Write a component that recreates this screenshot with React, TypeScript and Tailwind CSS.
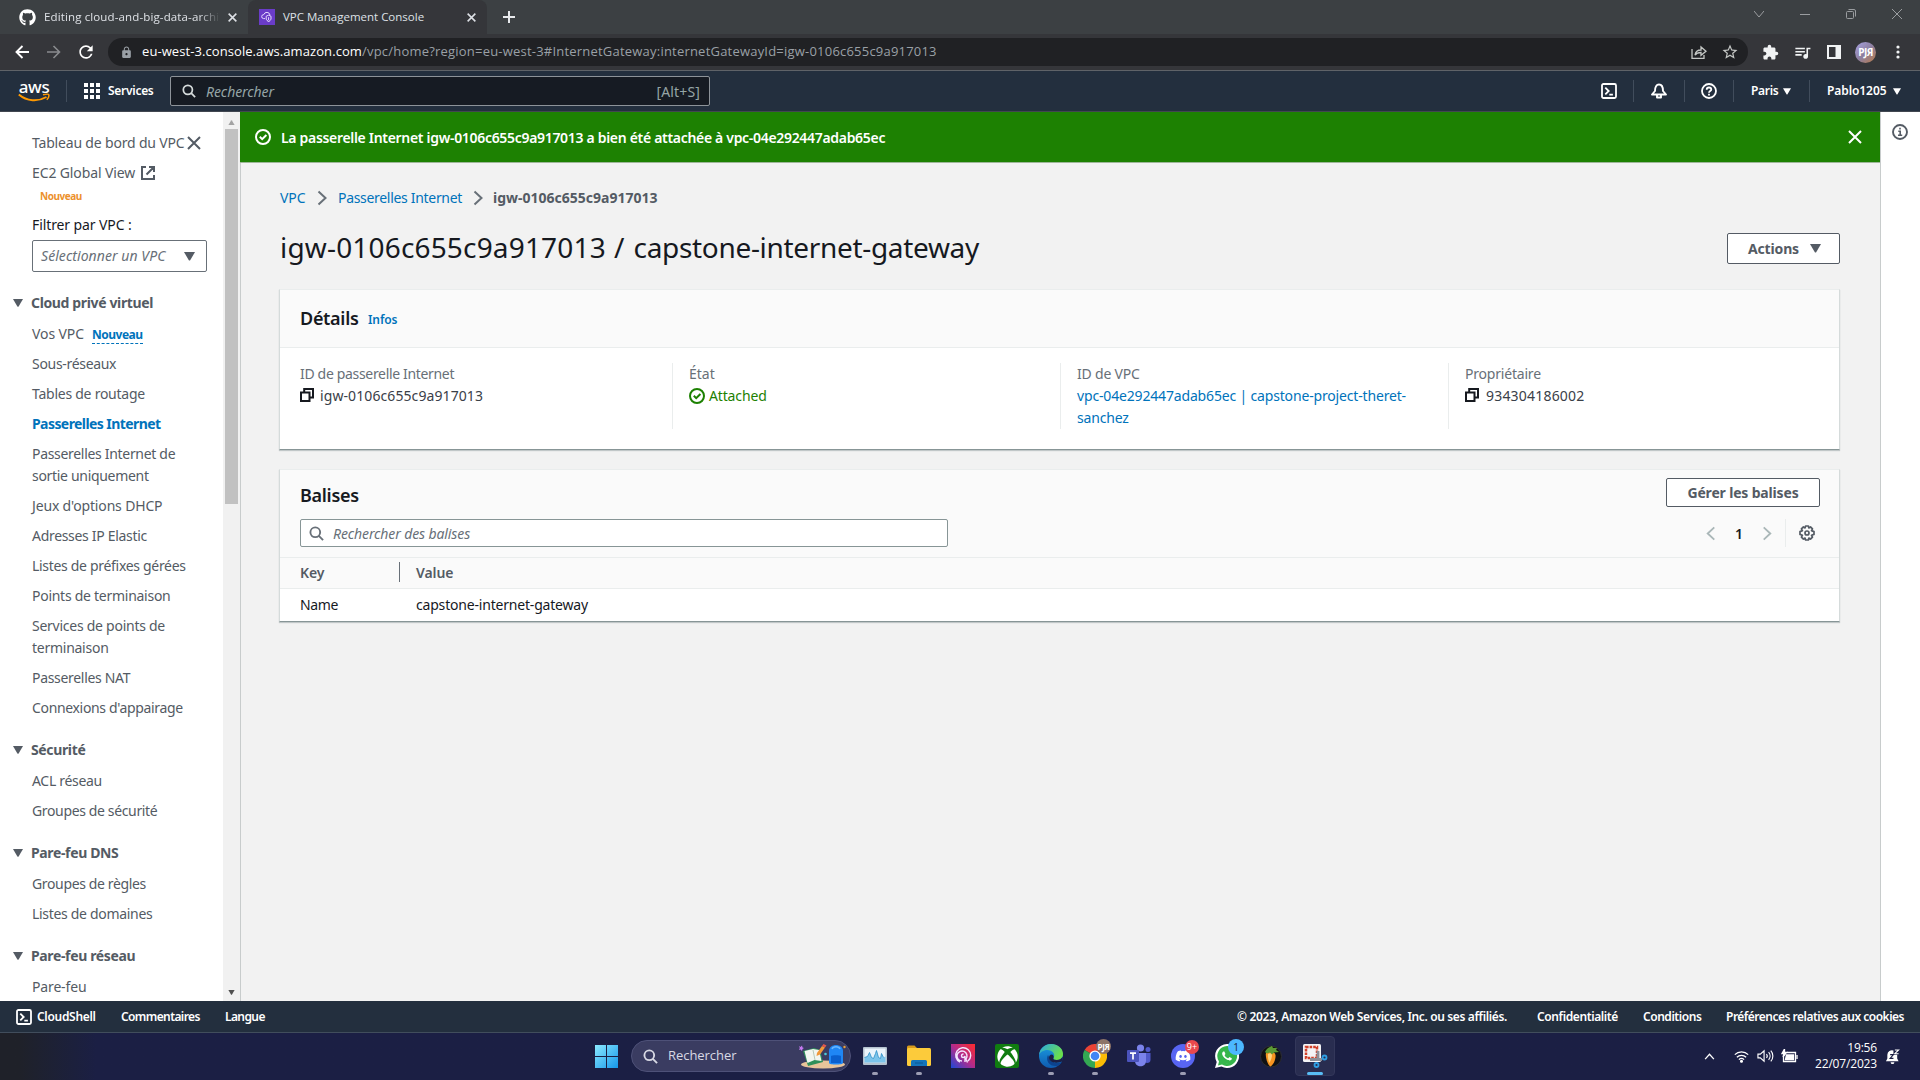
import React from "react";
import { FaGithub, FaXbox, FaDiscord, FaWhatsapp } from "react-icons/fa";
import { MdExtension, MdLock, MdStarBorder, MdRefresh, MdQueueMusic } from "react-icons/md";

type IconProps = { className?: string };

const Triangle = ({ className = "" }: IconProps) => (
  <svg viewBox="0 0 10 8" className={`shrink-0 ${className}`} fill="currentColor">
    <path d="M0 0h10L5.6 7.4a.8.8 0 0 1-1.2 0z" />
  </svg>
);

const Cross = ({ className = "" }: IconProps) => (
  <svg viewBox="0 0 14 14" className={`shrink-0 ${className}`} fill="none" stroke="currentColor">
    <path d="M1 1l12 12M13 1L1 13" />
  </svg>
);

const Chevron = ({ className = "" }: IconProps) => (
  <svg viewBox="0 0 10 16" className={`shrink-0 ${className}`} fill="none" stroke="currentColor" strokeWidth="2">
    <path d="M1.5 1.5L8.5 8l-7 6.5" />
  </svg>
);

const Magnifier = ({ className = "" }: IconProps) => (
  <svg viewBox="0 0 16 16" className={`shrink-0 ${className}`} fill="none" stroke="currentColor" strokeWidth="2">
    <circle cx="6.7" cy="6.7" r="5.2" />
    <path d="M10.5 10.5L15 15" />
  </svg>
);

const CheckCircle = ({ className = "" }: IconProps) => (
  <svg viewBox="0 0 16 16" className={`shrink-0 ${className}`} fill="none" stroke="currentColor" strokeWidth="2">
    <circle cx="8" cy="8" r="7" />
    <path d="M4.8 7.8l2.4 2.4 4.2-4.2" />
  </svg>
);

const CopyIcon = () => (
  <svg viewBox="0 0 14 14" className="mb-[2px] size-[14px] shrink-0" fill="none" stroke="#16191f" strokeWidth="2">
    <path d="M1 4.5h8.5V13H1zM4.2 4.5V1H13v8.4H9.8" />
  </svg>
);

const ShellIcon = () => (
  <svg viewBox="0 0 16 16" className="size-4 shrink-0" fill="none" stroke="#fff" strokeWidth="1.8">
    <rect x="1" y="1" width="14" height="14" rx="1.5" />
    <path d="M4.3 4.6L7.7 8l-3.4 3.4M8.3 11.6h3.6" />
  </svg>
);

const NavDivider = () => <div className="h-[22px] w-px shrink-0 bg-[#414d5c]" />;

function TabStrip() {
  return (
    <div className="flex h-[34px] shrink-0 bg-[#3c4043] font-['Open_Sans',sans-serif] text-[11.5px] text-[#dee1e6]">
      <div className="flex w-[248px] items-center pl-[19px]">
        <FaGithub className="size-[17px] text-white" />
        <span className="ml-2 w-[176px] overflow-hidden tracking-[0.130px] whitespace-nowrap [mask-image:linear-gradient(to_right,#000_88%,transparent)]">
          Editing cloud-and-big-data-archi
        </span>
        <Cross className="ml-2 size-[9px] stroke-[2.4]" />
      </div>
      <div className="flex w-[239px] items-center rounded-t-lg bg-[#35363a] pl-[11px]">
        <svg viewBox="0 0 16 16" className="size-4" fill="none" stroke="#e6dbff">
          <rect width="16" height="16" fill="#6a3cc8" stroke="none" />
          <path d="M6 9.6H4.6a2 2 0 0 1 .2-4A3.2 3.2 0 0 1 11 6M7.2 7.2l2.4-1 2.4 1v3L9.6 13 7.2 10.200zM9.600 8.200v3" />
        </svg>
        <span className="ml-2 w-[184px] whitespace-nowrap">VPC Management Console</span>
        <Cross className="size-[9px] stroke-[2.4]" />
      </div>
      <svg viewBox="0 0 12 12" className="mt-[11px] ml-4 size-3" stroke="#e8eaed" strokeWidth="2">
        <path d="M6 0v12M0 6h12" />
      </svg>
      <div className="mt-[9px] ml-auto flex h-[10px] items-center gap-9 pr-[18px] text-[#9a9da0]">
        <svg viewBox="0 0 10 10" className="size-[10px]" fill="none" stroke="currentColor"><path d="M0 2l5 6 5-6" /></svg>
        <svg viewBox="0 0 10 10" className="size-[10px]" fill="none" stroke="currentColor"><path d="M0 5.500h10" /></svg>
        <svg viewBox="0 0 10 10" className="size-[10px]" fill="none" stroke="currentColor">
          <rect x=".5" y="2.500" width="7" height="7" rx="1" />
          <path d="M2.500 .5H8a1.500 1.500 0 0 1 1.500 1.500V7.500" />
        </svg>
        <svg viewBox="0 0 10 10" className="size-[10px]" fill="none" stroke="currentColor"><path d="M0 0l10 10M10 0L0 10" /></svg>
      </div>
    </div>
  );
}

function AddressBar() {
  return (
    <div className="flex h-[36px] shrink-0 items-center bg-[#35363a] pl-[15px] font-['Open_Sans',sans-serif]">
      <svg viewBox="0 0 14 14" className="size-[14px]" fill="none" stroke="#fff" strokeWidth="1.900"><path d="M14 7H1.500M7.500 1L1.500 7l6 6" /></svg>
      <svg viewBox="0 0 14 14" className="ml-[18px] size-[14px]" fill="none" stroke="#898b8e" strokeWidth="1.600"><path d="M0 7h12.500M6.500 1l6 6-6 6" /></svg>
      <MdRefresh className="ml-[15px] size-5 text-white" />
      <div className="ml-[12px] flex h-7 w-[1640px] items-center rounded-full bg-[#202124] pl-3">
        <MdLock className="size-[13px] text-[#9aa0a6]" />
        <span className="ml-[9px] text-[13px] tracking-[0.077px] whitespace-nowrap text-white">eu-west-3.console.aws.amazon.com</span>
        <span className="text-[13px] tracking-[0.21px] whitespace-nowrap text-[#9aa0a6]">
          /vpc/home?region=eu-west-3#InternetGateway:internetGatewayId=igw-0106c655c9a917013
        </span>
        <div className="ml-auto flex items-center gap-[14px] pr-[9px] text-[#c4c7c5]">
          <svg viewBox="0 0 16 14" className="h-[14px] w-4" fill="none" stroke="currentColor" strokeWidth="1.300">
            <path d="M1 4v9.300h12V10M4 10c.500-3.500 2.500-5 6-5V2l5 4.300-5 4V7.500C7.500 7.500 5.500 8 4 10z" />
          </svg>
          <MdStarBorder className="size-[18px]" />
        </div>
      </div>
      <div className="flex flex-1 items-center text-[#f1f3f4]">
        <MdExtension className="ml-[14px] size-[17px]" />
        <MdQueueMusic className="ml-[14px] size-[19px]" />
        <svg viewBox="0 0 14 14" className="ml-[15px] size-[14px]" fill="none" stroke="currentColor">
          <rect x="1" y="1" width="12" height="12" strokeWidth="2" />
          <path d="M11 1v12" strokeWidth="5" />
        </svg>
        <div className="ml-[14px] flex size-[21px] items-center justify-center rounded-full bg-linear-to-br from-[#a9a5e6] via-[#8d7fa0] to-[#b8783c] text-[10px] font-bold tracking-[-0.500px] text-white">
          PJЯ
        </div>
        <svg viewBox="0 0 4 14" className="ml-[20px] h-[14px] w-1" fill="currentColor">
          <circle cx="2" cy="2" r="1.600" /><circle cx="2" cy="7" r="1.600" /><circle cx="2" cy="12" r="1.600" />
        </svg>
      </div>
    </div>
  );
}

function AwsNav() {
  return (
    <header className="flex h-[42px] shrink-0 items-center border-y border-t-[#5f6368] border-b-[#414750] bg-[#232f3e] pl-[18px] text-[12px] font-semibold text-white">
      <div className="flex w-8 flex-col items-center">
        <span className="h-[12px] text-[17px] leading-[11px] font-medium tracking-[-0.400px]">aws</span>
        <svg viewBox="0 0 32 9" className="h-[9px] w-8" fill="none" stroke="#f90" strokeWidth="2">
          <path d="M0.800 1.500C9 8.500 20 8.800 28.500 4" />
          <path d="M25 1.800c3-.8 5.500-.8 5.800 0 .3 1-.6 3.500-2 5" strokeWidth="1.500" />
        </svg>
      </div>
      <div className="ml-4"><NavDivider /></div>
      <svg viewBox="0 0 16 16" className="ml-[17px] size-4" fill="#fff">
        {[0, 6, 12].map((y) => [0, 6, 12].map((x) => <rect key={`${x}-${y}`} x={x} y={y} width="4" height="4" />))}
      </svg>
      <span className="ml-[8px] w-[62px] tracking-[-0.280px]">Services</span>
      <div className="flex h-[30px] w-[540px] items-center rounded-[2px] border border-[#8d9399] bg-[#161b23] pr-[9px] pl-[11px] text-[14px] font-normal text-[#95a5a6]">
        <Magnifier className="size-[14px] text-[#d5dbdb]" />
        <span className="ml-[10px] tracking-[-0.070px] italic">Rechercher</span>
        <span className="ml-auto tracking-[0.130px]">[Alt+S]</span>
      </div>
      <div className="ml-auto flex items-center pr-[19px]">
        <ShellIcon />
        <div className="ml-[16px]"><NavDivider /></div>
        <svg viewBox="0 0 16 16" className="ml-[17px] size-4" fill="none" stroke="#fff" strokeWidth="1.900">
          <path d="M1 11.500h14L12 8C12 4 10.500 1.500 8 1.500S4 4 4 8zM6 12v2.500h4V12" strokeLinejoin="round" />
        </svg>
        <div className="ml-[17px]"><NavDivider /></div>
        <svg viewBox="0 0 16 16" className="ml-[16px] size-4" fill="none" stroke="#fff" strokeWidth="1.800">
          <circle cx="8" cy="8" r="7" />
          <path d="M5.700 6.700c0-1.400 1-2.200 2.300-2.200s2.300.8 2.300 2c0 1.500-2.300 1.600-2.300 3.200M8 10.800v1.600" />
        </svg>
        <div className="ml-[16px]"><NavDivider /></div>
        <span className="ml-[17px] w-[32px] tracking-[-0.300px]">Paris</span>
        <Triangle className="h-[7px] w-2" />
        <div className="ml-[18px]"><NavDivider /></div>
        <span className="ml-[17px] w-[66px] tracking-[-0.080px]">Pablo1205</span>
        <Triangle className="h-[7px] w-2" />
      </div>
    </header>
  );
}

type Item = { lines: string[]; active?: boolean; badge?: boolean; spacing?: string };
type Section = { title: string; items: Item[] };

const sections: Section[] = [
  {
    title: "Cloud privé virtuel",
    items: [
      { lines: ["Vos VPC"], badge: true, spacing: "tracking-[-0.100px]" },
      { lines: ["Sous-réseaux"] },
      { lines: ["Tables de routage"], spacing: "tracking-[-0.250px]" },
      { lines: ["Passerelles Internet"], active: true },
      { lines: ["Passerelles Internet de", "sortie uniquement"] },
      { lines: ["Jeux d'options DHCP"], spacing: "tracking-[-0.160px]" },
      { lines: ["Adresses IP Elastic"] },
      { lines: ["Listes de préfixes gérées"] },
      { lines: ["Points de terminaison"], spacing: "tracking-[-0.270px]" },
      { lines: ["Services de points de", "terminaison"], spacing: "tracking-[-0.260px]" },
      { lines: ["Passerelles NAT"] },
      { lines: ["Connexions d'appairage"], spacing: "tracking-[-0.340px]" },
    ],
  },
  { title: "Sécurité", items: [{ lines: ["ACL réseau"] }, { lines: ["Groupes de sécurité"], spacing: "tracking-[-0.360px]" }] },
  { title: "Pare-feu DNS", items: [{ lines: ["Groupes de règles"], spacing: "tracking-[-0.360px]" }, { lines: ["Listes de domaines"] }] },
  { title: "Pare-feu réseau", items: [{ lines: ["Pare-feu"], spacing: "tracking-[-0.150px]" }] },
];

function Sidebar() {
  return (
    <aside className="flex w-[240px] shrink-0 bg-white">
      <nav className="w-[223px] overflow-hidden pt-5 text-[14px] leading-[22px] tracking-[-0.310px] whitespace-nowrap text-[#545b64]">
        <div className="flex items-center pl-8">
          <span className="w-[155px] tracking-[-0.180px]">Tableau de bord du VPC</span>
          <Cross className="size-[14px] stroke-[2]" />
        </div>
        <div className="mt-2 flex items-center pl-8">
          <span className="w-[109px] tracking-[-0.120px]">EC2 Global View</span>
          <svg viewBox="0 0 14 14" className="size-[14px]" fill="none" stroke="currentColor" strokeWidth="2">
            <path d="M5 1H1v12h12V9M8 1h5v5M13 1L5.500 8.500" />
          </svg>
        </div>
        <div className="mt-[3px] h-[18px] pl-10 text-[10px] leading-[18px] font-bold tracking-[-0.450px] text-[#ec912d]">Nouveau</div>
        <div className="mt-[9px] pl-8 tracking-[-0.100px] text-[#16191f]">Filtrer par VPC :</div>
        <div className="mt-1 ml-8 flex h-8 w-[175px] items-center justify-between rounded-[2px] border border-[#687078] pr-[11px] pl-2">
          <span className="tracking-[0.060px] text-[#687078] italic">Sélectionner un VPC</span>
          <Triangle className="h-[9px] w-[11px]" />
        </div>
        {sections.map((s) => (
          <section key={s.title} className="mt-5">
            <h3 className="flex items-center pl-[13px] font-bold tracking-[-0.360px]">
              <Triangle className="mr-[8px] h-2 w-[10px]" />
              {s.title}
            </h3>
            <ul className="mt-[9px] flex flex-col gap-2 pl-8">
              {s.items.map((it) => (
                <li key={it.lines[0]} className={it.active ? "font-bold tracking-[-0.570px] text-[#0073bb]" : it.spacing}>
                  {it.lines.map((l) => (
                    <div key={l} className="flex items-center">
                      {l}
                      {it.badge && (
                        <span className="mt-[2px] ml-[8px] h-[18px] border-b border-dashed border-[#0073bb] text-[12px] leading-[17px] font-bold tracking-[-0.500px] text-[#0073bb]">
                          Nouveau
                        </span>
                      )}
                    </div>
                  ))}
                </li>
              ))}
            </ul>
          </section>
        ))}
      </nav>
      <div className="flex w-[17px] flex-col items-center bg-[#f1f1f1]">
        <Triangle className="mt-2 h-[5px] w-[7px] rotate-180 text-[#a3a3a3]" />
        <div className="mt-1 h-[375px] w-[13px] bg-[#c1c1c1]" />
        <Triangle className="mt-auto mb-[6px] h-[5px] w-[7px] text-[#505050]" />
      </div>
    </aside>
  );
}

const panel = "border-x border-b border-t border-x-[#d5dbdb] border-t-[#eaeded] border-b-[#879596] bg-white shadow-[0_1px_1px_rgba(0,28,36,0.200)]";

function Details() {
  return (
    <section className={`mt-[25px] h-[161px] ${panel}`}>
      <div className="flex h-[58px] items-center border-b border-[#eaeded] bg-[#fafafa] pl-5">
        <h2 className="w-[68px] text-[18px] font-semibold tracking-[-0.300px] text-[#16191f]">Détails</h2>
        <span className="mt-[3px] text-[12px] font-semibold tracking-[-0.100px] text-[#0073bb]">Infos</span>
      </div>
      <dl className="mt-[15px] grid h-[66px] grid-cols-[393px_388px_388px_1fr] text-[14px] leading-[22px] whitespace-nowrap text-[#3a4048]">
        <div className="border-r border-[#eaeded] pl-5">
          <dt className="tracking-[-0.330px] text-[#687078]">ID de passerelle Internet</dt>
          <dd className="flex items-center gap-[6px] tracking-[0.090px]"><CopyIcon />igw-0106c655c9a917013</dd>
        </div>
        <div className="border-r border-[#eaeded] pl-4">
          <dt className="text-[#687078]">État</dt>
          <dd className="flex items-center gap-1 tracking-[-0.150px] text-[#1d8102]"><CheckCircle className="size-4" />Attached</dd>
        </div>
        <div className="border-r border-[#eaeded] pl-4">
          <dt className="tracking-[-0.200px] text-[#687078]">ID de VPC</dt>
          <dd className="tracking-[-0.165px] text-[#0073bb]">vpc-04e292447adab65ec | capstone-project-theret-<br />sanchez</dd>
        </div>
        <div className="pl-4">
          <dt className="tracking-[-0.200px] text-[#687078]">Propriétaire</dt>
          <dd className="flex items-center gap-[7px] tracking-[0.200px]"><CopyIcon />934304186002</dd>
        </div>
      </dl>
    </section>
  );
}

function Tags() {
  return (
    <section className={`mt-[19px] h-[153px] ${panel}`}>
      <div className="flex h-[88px] justify-between border-b border-[#eaeded] bg-[#fafafa] pr-[19px] pl-5">
        <div className="pt-[13px]">
          <h2 className="h-[24px] text-[18px] leading-[24px] font-semibold tracking-[-0.300px] text-[#16191f]">Balises</h2>
          <div className="mt-[12px] flex h-7 w-[648px] items-center rounded-[2px] border border-[#879596] bg-white pl-2 text-[14px] tracking-[-0.110px] text-[#687078] italic">
            <Magnifier className="mr-[9px] size-[15px]" />
            Rechercher des balises
          </div>
        </div>
        <div className="flex flex-col items-end pt-2">
          <button className="flex h-[29px] w-[154px] items-center justify-center rounded-[2px] border border-[#545b64] bg-white text-[14px] font-bold tracking-[-0.170px] text-[#545b64]">
            Gérer les balises
          </button>
          <div className="mt-3 flex h-7 items-center pr-[5px]">
            <Chevron className="h-[15px] w-[10px] rotate-180 text-[#aab7b8]" />
            <span className="mx-[19px] w-2 text-center text-[14px] font-semibold text-[#16191f]">1</span>
            <Chevron className="h-[15px] w-[10px] text-[#aab7b8]" />
            <div className="ml-[13px] h-7 w-px bg-[#eaeded]" />
            <svg viewBox="0 0 16 16" className="ml-[13px] size-4" fill="none" stroke="#545b64" strokeWidth="1.700">
              <path d="M6.600 1h2.800l.4 1.900 1.700-1 2 2-1 1.700L15 6.600v2.800l-2.500.9 1 1.800-2 2-1.700-1L9.400 15H6.600l-.5-1.900-1.700 1-2-2 1-1.800L1 9.400V6.600l2.400-1-1-1.700 2-2 1.700 1z" strokeLinejoin="round" />
              <circle cx="8" cy="8" r="2" />
            </svg>
          </div>
        </div>
      </div>
      <div className="flex h-[31px] items-center border-b border-[#eaeded] bg-[#fafafa] pb-[2px] pl-5 text-[14px] font-semibold tracking-[-0.100px] text-[#545b64]">
        <span className="w-[99px]">Key</span>
        <div className="mr-4 h-5 w-px bg-[#687078]" />
        <span>Value</span>
      </div>
      <div className="flex h-[32px] items-center pb-[2px] pl-5 text-[14px] tracking-[-0.190px] text-[#16191f]">
        <span className="w-[116px] tracking-[-0.400px]">Name</span>
        <span>capstone-internet-gateway</span>
      </div>
    </section>
  );
}

function Main() {
  return (
    <main className="flex flex-1 flex-col bg-[#f2f2f2]">
      <div className="flex h-[51px] items-center border-b border-[#9fb79a] bg-[#1d8102] pr-[18px] pl-[15px] text-[14px] font-semibold text-white">
        <CheckCircle className="size-4" />
        <p className="ml-[10px] tracking-[-0.310px] whitespace-nowrap">
          La passerelle Internet igw-0106c655c9a917013 a bien été attachée à vpc-04e292447adab65ec
        </p>
        <Cross className="ml-auto size-[14px] stroke-[2]" />
      </div>
      <div className="flex-1 border-l border-[#c8cccc] pr-10 pl-[38px]">
        <div className="mt-[24px] ml-px flex h-[22px] items-center text-[14px] leading-[22px] text-[#0073bb]">
          <span className="w-[37px] tracking-[-0.100px]">VPC</span>
          <Chevron className="h-[16px] w-[10px] text-[#687078]" />
          <span className="ml-[11px] w-[135px] tracking-[-0.310px]">Passerelles Internet</span>
          <Chevron className="h-[16px] w-[10px] text-[#687078]" />
          <span className="ml-[10px] font-bold tracking-[0.000px] text-[#545b64]">igw-0106c655c9a917013</span>
        </div>
        <div className="mt-[24px] ml-px flex h-[31px] items-center justify-between">
          <h1 className="-mt-1 flex text-[28px] leading-8 whitespace-pre text-[#16191f]">
            <span className="tracking-[0.170px]">igw-0106c655c9a917013</span>
            <span className="tracking-[0.900px]"> / </span>
            <span className="tracking-[-0.320px]">capstone-internet-gateway</span>
          </h1>
          <button className="flex h-[31px] w-[113px] items-center rounded-[2px] border border-[#545b64] bg-white pl-5 text-[14px] font-bold tracking-[-0.150px] text-[#545b64]">
            Actions
            <Triangle className="ml-[11px] h-[9px] w-[11px]" />
          </button>
        </div>
        <Details />
        <Tags />
      </div>
    </main>
  );
}

function Footer() {
  return (
    <footer className="flex h-8 shrink-0 items-center border-b border-[#414d5c] bg-[#232f3e] pr-4 pl-4 text-[12px] font-semibold whitespace-nowrap text-white">
      <ShellIcon />
      <span className="ml-[5px] w-[84px] tracking-[-0.300px]">CloudShell</span>
      <span className="w-[104px] tracking-[-0.600px]">Commentaires</span>
      <span className="tracking-[-0.600px]">Langue</span>
      <span className="ml-auto w-[300px] tracking-[-0.355px]">© 2023, Amazon Web Services, Inc. ou ses affiliés.</span>
      <span className="w-[106px] tracking-[-0.382px]">Confidentialité</span>
      <span className="w-[83px] tracking-[-0.450px]">Conditions</span>
      <span className="w-[178px] tracking-[-0.503px]">Préférences relatives aux cookies</span>
    </footer>
  );
}

function TaskItem({ children, dot }: { children: React.ReactNode; dot?: boolean }) {
  return (
    <div className="flex h-10 w-11 flex-col items-center pt-2">
      <div className="relative size-6">{children}</div>
      {dot && <div className="mt-[4px] h-[3px] w-[6px] rounded-full bg-[#9c9db3]" />}
    </div>
  );
}

function Taskbar() {
  return (
    <div className="flex h-[47px] shrink-0 bg-linear-to-r from-[#1f2129] from-1% via-[#1b1f44] via-5% to-[#1b1f44] pt-[3px] font-['Open_Sans',sans-serif] text-white">
      <svg viewBox="0 0 23 23" className="mt-[9px] ml-[595px] size-[23px]">
        <defs>
          <linearGradient id="win" x1="0" y1="0" x2="1" y2="1"><stop stopColor="#8be9ff" /><stop offset="1" stopColor="#1597ea" /></linearGradient>
        </defs>
        <path fill="url(#win)" d="M0 0h11v11H0zM12 0h11v11H12zM0 12h11v11H0zM12 12h11v11H12z" />
      </svg>
      <div className="mt-1 ml-[13px] flex h-8 w-[220px] items-center rounded-full border border-[#4e5178] bg-[#3a3c61] pl-[11px] text-[13px] tracking-[-0.050px] text-[#d8d9e4]">
        <Magnifier className="mr-[10px] size-[15px]" />
        <span>Rechercher</span>
        <svg viewBox="0 0 48 26" className="ml-auto mr-[4px] h-[26px] w-12">
          <ellipse cx="25" cy="21.500" rx="22" ry="4" fill="#e8c49a" />
          <path d="M5 8l11-3 6 2 3 12-15 4z" fill="#2f8f5a" />
          <path d="M6.500 8l8.500-2 6 1 2.500 11-7-1-7 3z" fill="#f2f6f0" />
          <path d="M15 7l2 10" stroke="#b7c9b8" />
          <path d="M19 10l5-7 3 1.500-5 7-3.500 1.500z" fill="#f0993a" />
          <path d="M24 3l1.500-2 3 1.500L27 4.500z" fill="#e4574c" />
          <path d="M31 8c0-8 14-8 14 0v12c0 2-14 2-14 0z" fill="#1f86f5" />
          <path d="M33 13c0-1 10-1 10 0v7H33z" fill="#0a5fce" />
          <path d="M34 6c1-3 7-3 8 0" stroke="#6ab7ff" strokeWidth="1.500" fill="none" />
          <path d="M1 3l1.500 1L4 2.500l.5 2L6 5l-1.500 1L4 8 2.500 6.500 1 7l.8-2z" fill="#c67af2" />
          <circle cx="46.500" cy="4" r="1.200" fill="#e9a13b" /><circle cx="27.500" cy="11" r="1.300" fill="#4cc9d8" />
        </svg>
      </div>
      <div className="ml-[2px] flex">
        <TaskItem dot>
          <svg viewBox="0 0 24 24" className="size-6">
            <rect y="3" width="24" height="18" rx="1" fill="#b5c3cf" /><rect x="1.500" y="4.500" width="21" height="14" fill="#eaf4fb" />
            <path d="M1.500 18.500v-5l3-1 2-4 2 5 2 1 2-5 1-3 2 7 2 1 1-5 2 4 2-1v6z" fill="#7cc4ea" />
            <path d="M1.500 13.500l3-1 2-4 2 5 2 1 2-5 1-3 2 7 2 1 1-5 2 4" fill="none" stroke="#2d8fc7" strokeWidth=".8" />
          </svg>
        </TaskItem>
        <TaskItem dot>
          <svg viewBox="0 0 24 24" className="size-6">
            <path d="M0 3a1.500 1.500 0 0 1 1.500-1.500h6L10 4v5H0z" fill="#d89b1c" />
            <rect y="4" width="24" height="18" rx="1.500" fill="#fccb3b" />
            <path d="M4 22v-4.500A1.500 1.500 0 0 1 5.500 16h13a1.500 1.500 0 0 1 1.500 1.500V22z" fill="#1574bb" /><path d="M8 19h8" stroke="#0d5590" />
          </svg>
        </TaskItem>
        <TaskItem>
          <svg viewBox="0 0 24 24" className="size-6" fill="none">
            <defs><linearGradient id="rec" x1="0" y1="1" x2="1" y2="0"><stop stopColor="#1c48d8" /><stop offset=".5" stopColor="#b42b8a" /><stop offset="1" stopColor="#ff2b2b" /></linearGradient></defs>
            <rect width="24" height="24" fill="url(#rec)" />
            <path d="M9 18a7.500 7.500 0 1 1 8-1M11 17a5 5 0 1 1 4-2l1.500 3.500M12.500 10a2 2 0 0 0-2 2c0 2 3 2 3.500 0v6" stroke="#f3e6ff" strokeWidth="1.400" />
          </svg>
        </TaskItem>
        <TaskItem>
          <div className="flex size-6 items-center justify-center rounded-[2px] bg-[#107c10]"><FaXbox className="size-[21px] text-white" /></div>
        </TaskItem>
        <TaskItem dot>
          <svg viewBox="0 0 24 24" className="size-6">
            <defs>
              <linearGradient id="ed1" x1="0" y1="0" x2="1" y2=".5"><stop stopColor="#2aa7e6" /><stop offset="1" stopColor="#6be04a" /></linearGradient>
              <linearGradient id="ed2" x1="0" y1="0" x2="0" y2="1"><stop stopColor="#1b9de2" /><stop offset="1" stopColor="#0f5bb0" /></linearGradient>
            </defs>
            <circle cx="12" cy="12" r="12" fill="url(#ed2)" />
            <path d="M0 11C1 4 6 0 12 0c7 0 12 4.500 12 10 0 4-3 6-6.500 6-2.500 0-3.700-1-3-2C17 10 13 6 8.500 6 4 6 1 8.500 0 11z" fill="url(#ed1)" />
            <path d="M9 11c-3 6 2 12 9 11 2-.5 4-2.500 5-4-4 2-12 1-13-5z" fill="#0c438f" />
            <path d="M14.500 14c-.8 1 .5 2 3 2 3 0 5-1 6.200-3.500V17c-5 3-13 2-13.700-3 0-2 1-3.500 3-3.500 1.500.5 2 2.500 1.500 3.500z" fill="#1b1f44" />
          </svg>
        </TaskItem>
        <TaskItem dot>
          <svg viewBox="0 0 24 24" className="size-6">
            <path d="M12 12L1.600 6A12 12 0 0 1 22.400 6z" fill="#ea4335" /><path d="M12 12L1.600 6A12 12 0 0 0 12 24z" fill="#34a853" />
            <path d="M12 12V24A12 12 0 0 0 22.400 6z" fill="#fbbc05" /><circle cx="12" cy="12" r="5.600" fill="#fff" /><circle cx="12" cy="12" r="4.300" fill="#4285f4" />
          </svg>
          <div className="absolute -top-[5px] left-[13px] flex size-[15px] items-center justify-center rounded-full bg-[#8d7468] text-[8px] font-bold tracking-[-0.400px] text-white">PJЯ</div>
        </TaskItem>
        <TaskItem>
          <svg viewBox="0 0 24 24" className="size-6">
            <circle cx="21" cy="5.500" r="2.500" fill="#5059c9" /><circle cx="13.500" cy="4" r="3.600" fill="#7b83eb" />
            <path d="M17 9h6.500v7c0 4-6.500 4-6.500 0z" fill="#5059c9" /><path d="M8 9h11v8c0 7-11 7-11 0z" fill="#7b83eb" />
            <rect y="6" width="12" height="12" rx="1" fill="#4b53bc" /><path d="M3 9.200h6M6 9.200v6.300" stroke="#fff" strokeWidth="1.700" />
          </svg>
        </TaskItem>
        <TaskItem dot>
          <div className="flex size-6 items-center justify-center rounded-full bg-[#5865f2]"><FaDiscord className="size-4 text-white" /></div>
          <div className="absolute -top-[4px] left-[14px] flex size-[14px] items-center justify-center rounded-full bg-[#e9484d] text-[9px] text-white">9+</div>
        </TaskItem>
        <TaskItem>
          <svg viewBox="0 0 24 24" className="size-6"><path d="M12 0a12 12 0 1 1-5.500 22.600L0 24l1.700-6A12 12 0 0 1 12 0z" fill="#fff" /><path d="M12 2a10 10 0 1 1-5 18.600L3 21.500l1-4A10 10 0 0 1 12 2z" fill="#35b64b" /></svg>
          <FaWhatsapp className="absolute top-[1px] left-[1px] size-[22px] text-white [clip-path:circle(33%)]" />
          <div className="absolute -top-[5px] left-[13px] flex size-4 items-center justify-center rounded-full bg-[#4cb8ff] text-[10px] text-[#14233a]">1</div>
        </TaskItem>
        <TaskItem>
          <svg viewBox="0 0 24 24" className="size-6">
            <circle cx="12" cy="12.500" r="10.500" fill="#101114" stroke="#2c2d33" />
            <path d="M7 9c4-3 9-1 9.500 2 .5 4-2 10-5 11.500C9 22 6 13 7 9z" fill="#f79420" /><path d="M9 10c2-1.500 4-1 4 1s-1 5-2.500 8C9.500 17 8.500 13 9 10z" fill="#ffd27a" />
            <path d="M6 8c1-3 4-5 7-6l1 2 4 0-1 2 3 2-5 .5-2 2-2-2-3 1z" fill="#5c9a34" />
          </svg>
        </TaskItem>
        <div className="ml-[2px] flex h-10 w-10 flex-col items-center rounded-[4px] border border-[#33375a] bg-[#292d50] pt-[7px]">
          <svg viewBox="0 0 24 24" className="size-6 overflow-visible">
            <rect width="18" height="18" rx="1.500" fill="#f4f4f6" /><rect x="3" y="3" width="11" height="11" fill="none" stroke="#d1402a" strokeWidth="2.500" strokeDasharray="2.600 1" />
            <path d="M15 7v10M7 15.500h12" stroke="#8b8f98" strokeWidth="2.800" />
            <circle cx="21.500" cy="13.500" r="2" fill="none" stroke="#2f9fe4" strokeWidth="1.800" /><circle cx="13.500" cy="21" r="2" fill="none" stroke="#2f9fe4" strokeWidth="1.800" />
          </svg>
          <div className="mt-[4px] h-[3px] w-4 shrink-0 rounded-full bg-[#58bdf5]" />
        </div>
      </div>
      <div className="ml-auto flex h-10 items-center pr-5">
        <svg viewBox="0 0 12 8" className="mr-[19px] h-[7px] w-[11px]" fill="none" stroke="#fff" strokeWidth="1.500"><path d="M1 7l5-5.500L11 7" /></svg>
        <svg viewBox="0 0 16 14" className="mr-[8px] h-[13px] w-[15px]" fill="none" stroke="#fff" strokeWidth="1.300">
          <path d="M.8 5a10 10 0 0 1 14.400 0M3 7.800a7 7 0 0 1 10 0M5.200 10.300a4 4 0 0 1 5.600 0" /><circle cx="8" cy="12.200" r="1" fill="#fff" />
        </svg>
        <svg viewBox="0 0 18 14" className="mr-[7px] h-[14px] w-[17px]" fill="none" stroke="#fff" strokeWidth="1.200">
          <path d="M1 5v4h2.500L7.500 12.500v-11L3.500 5zM10 5a3 3 0 0 1 0 4M12.300 3a6 6 0 0 1 0 8M14.600 1.300a8.500 8.500 0 0 1 0 11.400" />
        </svg>
        <svg viewBox="0 0 17 14" className="mr-[17px] h-[14px] w-[17px]" fill="none" stroke="#fff" strokeWidth="1.300">
          <path d="M6 3.500h8.500v9H2.500V8" /><path d="M5.500 6h7v4.500h-8z" fill="#fff" /><path d="M16 6v4M3.500 0L1 4.500h2L2 8l3.500-4.500h-2z" fill="#fff" />
        </svg>
        <div className="w-[62px] text-right text-[12px] leading-4 tracking-[-0.170px] whitespace-nowrap">
          <div>19:56</div>
          <div>22/07/2023</div>
        </div>
        <svg viewBox="0 0 16 16" className="ml-2 size-[15px]" fill="#fff">
          <path d="M1 13l1.500-3V6A5 5 0 0 1 9 1.500V6h4v4l1.500 3zM6 14h4a2 2 0 0 1-4 0z" />
          <path d="M10.500 1h4l-4 4h4" fill="none" stroke="#fff" strokeWidth="1.200" /><path d="M5.500 6h3.500l-3.500 4h3.500" fill="none" stroke="#1b1f44" strokeWidth="1.200" />
        </svg>
      </div>
    </div>
  );
}

export default function App() {
  return (
    <div className="flex h-[1080px] w-[1920px] flex-col overflow-hidden font-['Noto_Sans',sans-serif]">
      <TabStrip />
      <AddressBar />
      <AwsNav />
      <div className="flex h-[889px] shrink-0">
        <Sidebar />
        <Main />
        <aside className="flex w-10 justify-center border-l border-[#c8cccc] bg-white pt-3 pr-px">
          <svg viewBox="0 0 16 16" className="size-4" fill="none" stroke="#545b64" strokeWidth="1.900">
            <circle cx="8" cy="8" r="7" /><path d="M6.300 7.200H8.200V11M6 11.300h4.200M7.200 4.600h1.600" strokeWidth="1.600" />
          </svg>
        </aside>
      </div>
      <Footer />
      <Taskbar />
    </div>
  );
}
